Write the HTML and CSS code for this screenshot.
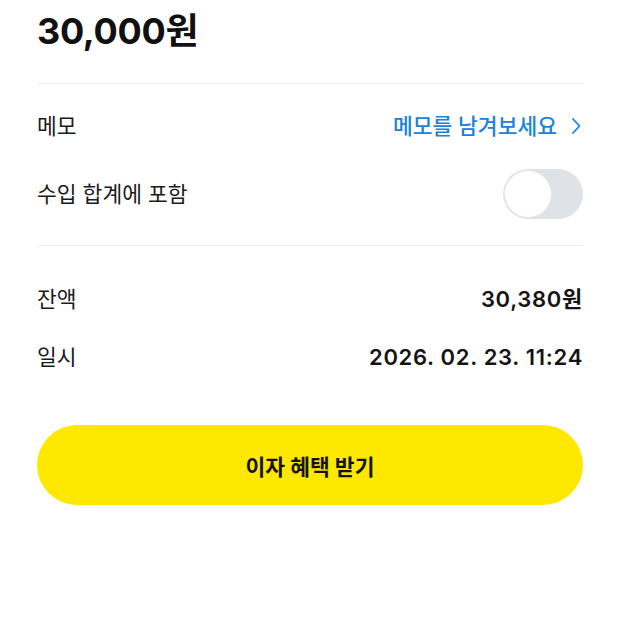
FILE: index.html
```html
<!DOCTYPE html>
<html lang="ko">
<head>
  <meta charset="UTF-8" />
  <meta name="viewport" content="width=device-width, initial-scale=1.0"/>
  <title>거래 상세</title>
  <link rel="stylesheet" href="styles.css">
</head>
<body>
  <main class="detail">
    <h1 class="amount">30,000원</h1>

    <hr class="divider" />

    <!-- Memo / income -->
    <section class="group group-top">
      <div class="row">
        <span class="label">메모</span>
        <a href="#" class="memo-link">
          메모를 남겨보세요
          <svg class="chevron" width="10" height="18" viewBox="0 0 10 18">
            <path d="M2 2 L8.5 9 L2 16" fill="none" stroke="currentColor" stroke-width="1.8" stroke-linecap="round" stroke-linejoin="round"/>
          </svg>
        </a>
      </div>
      <div class="row">
        <span class="label">수입 합계에 포함</span>
        <span class="toggle"><span class="knob"></span></span>
      </div>
    </section>

    <hr class="divider" />

    <!-- Balance / date -->
    <section class="group group-info">
      <div class="row info">
        <span class="label">잔액</span>
        <span class="value">30,380원</span>
      </div>
      <div class="row info">
        <span class="label">일시</span>
        <span class="value">2026. 02. 23. 11:24</span>
      </div>
    </section>

    <button class="cta">이자 혜택 받기</button>
  </main>
</body>
</html>
```

FILE: styles.css
```css
* { box-sizing: border-box; margin: 0; padding: 0; }
body { background: #fff; color: #111; font-family: Inter, "Noto Sans CJK KR", sans-serif; }

.detail { padding: 9px 37px 0; }

.amount { font-size: 36px; font-weight: 700; line-height: 44px; letter-spacing: -0.3px; }

.divider { border: 0; height: 1px; background: #eeeeee; }
.amount + .divider { margin-top: 30px; }

.group-top { padding: 8px 0 17px; }
.group-info { padding: 24px 0 0; }

.row { display: flex; align-items: center; justify-content: space-between; height: 68px; }
.row.info { height: 58px; }

.label { font-size: 21.5px; line-height: 28px; color: #1a1a1a; }

.memo-link { display: flex; align-items: center; gap: 14px; font-size: 21.5px; line-height: 28px; color: #1b82d8; text-decoration: none; font-weight: 500; }
.chevron { margin-right: 2px; }

.toggle { width: 80px; height: 50px; border-radius: 25px; background: #dfe3e8; padding: 2px; display: flex; align-items: center; }
.knob { width: 46px; height: 46px; border-radius: 50%; background: #fff; box-shadow: 0 0 0 1px #e4e6ea; }

.value { font-size: 22px; line-height: 28px; font-weight: 600; letter-spacing: 0.7px; color: #141414; }

.cta { display: block; width: 100%; height: 80px; margin-top: 39px; border: 0; border-radius: 40px; background: #ffe800; color: #141414; font-family: inherit; font-size: 21.5px; font-weight: 700; }
```
